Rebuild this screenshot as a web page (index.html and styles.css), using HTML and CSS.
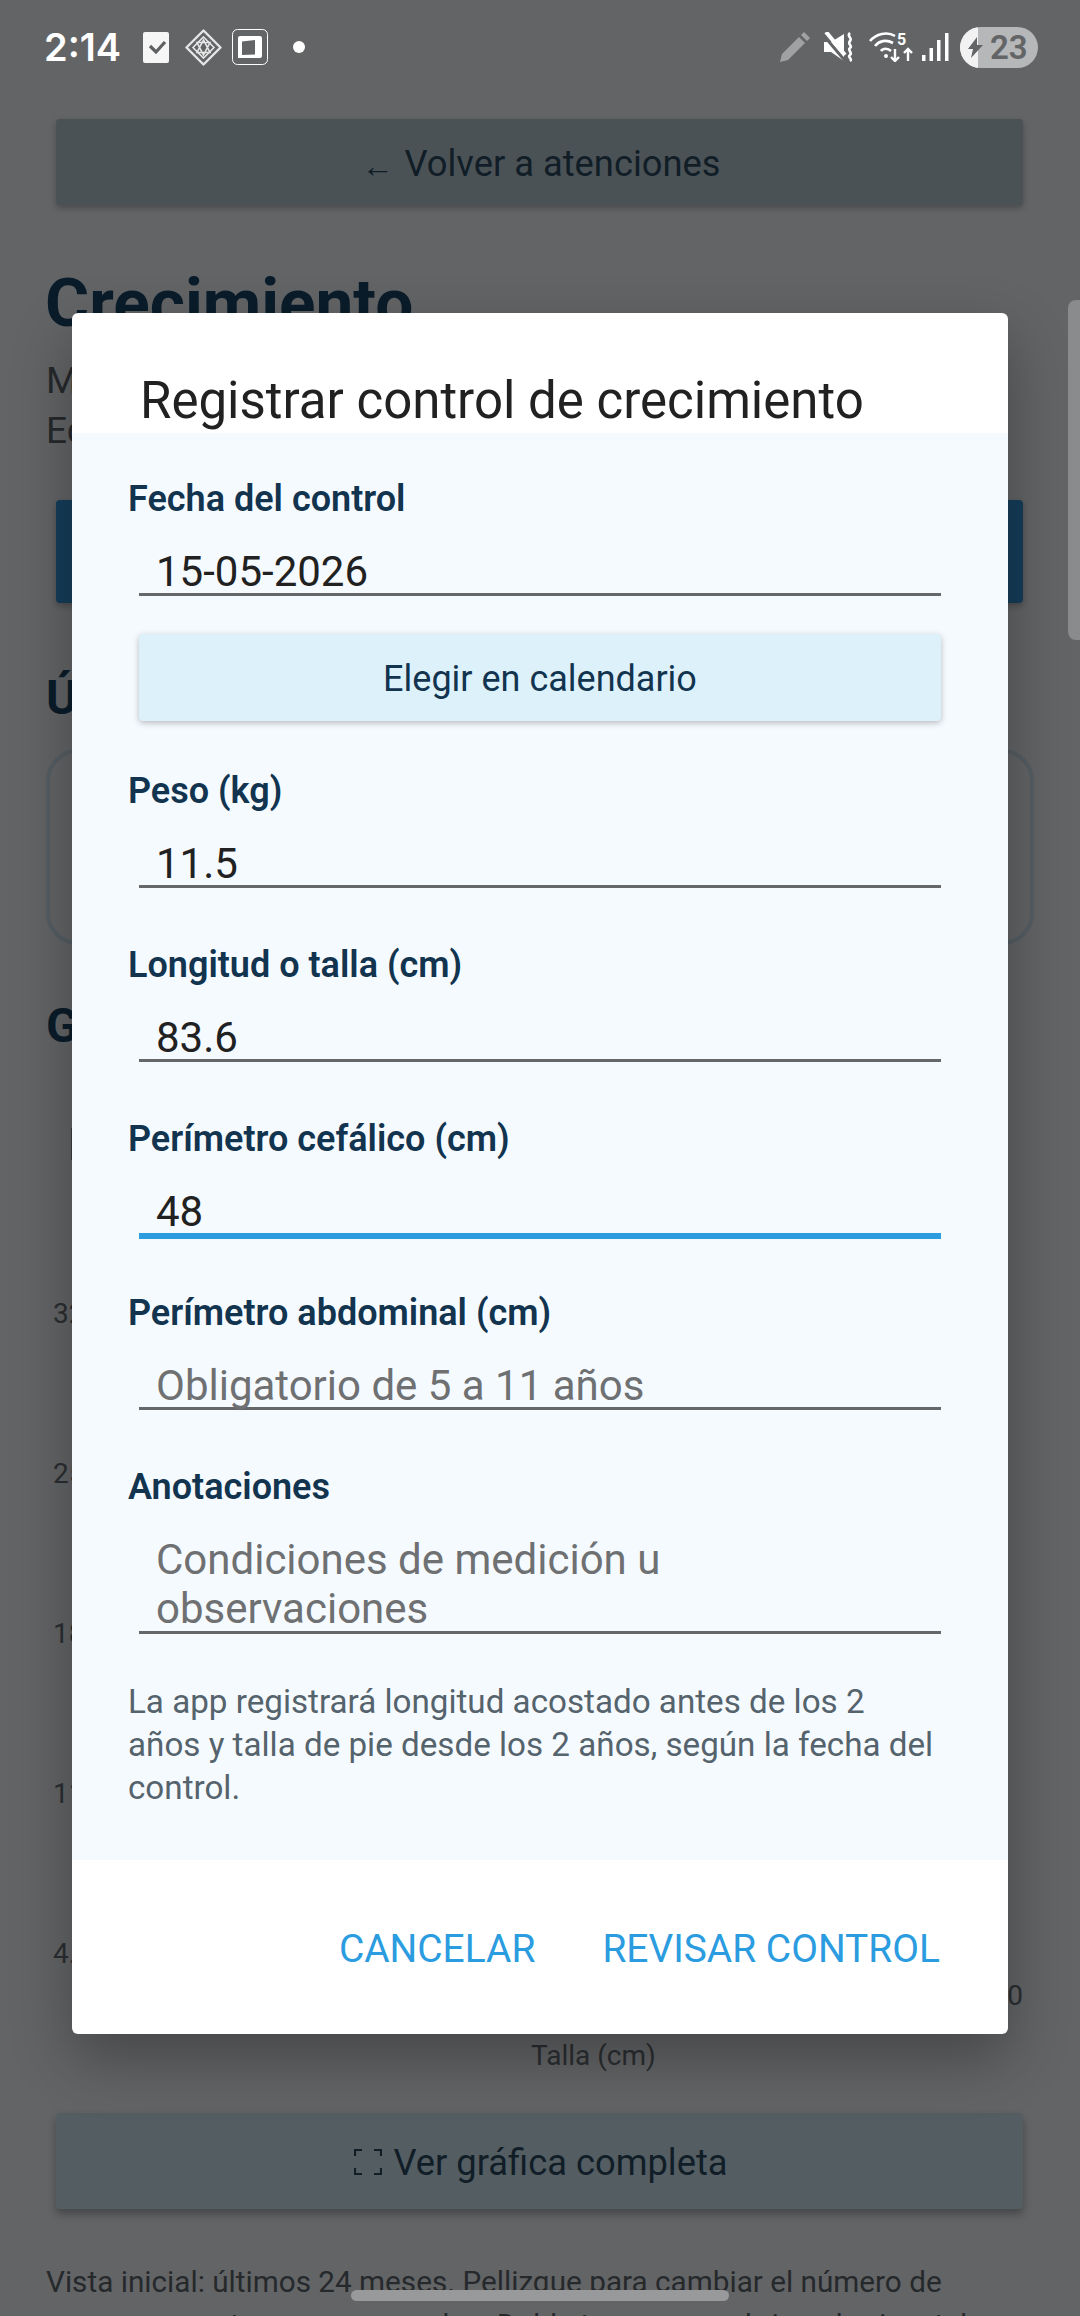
FILE: index.html
```html
<!DOCTYPE html>
<html>
<head>
    <meta charset="UTF-8">
    <title>Registrar control de crecimiento</title>
    <link rel="stylesheet" href="styles.css">
</head>
<body>
    <div class="screen">
        <!-- pantalla de fondo -->
        <div class="statusbar">
            <div class="status_left">
                <span class="clock">2:14</span>
                <svg class="ico_check" width="26" height="31" viewBox="0 0 26 31"><rect width="26" height="31" rx="2" fill="#f6f6f6"/><path d="M7 14l6 6 9-10" fill="none" stroke="#5f6062" stroke-width="3.2"/></svg>
                <svg class="ico_diamond" width="37" height="37" viewBox="0 0 37 37"><g fill="none" stroke="#e6e6e6"><path d="M18.500 1.500L35.500 18.500 18.500 35.500 1.500 18.500z" stroke-width="2.400" stroke-linejoin="round"/><path d="M18.500 8L29 18.500 18.500 29 8 18.500z" stroke-width="1.600"/><path d="M12 13.500h13L18.500 26zM12 23.500h13L18.500 11z" stroke-width="1.600"/></g></svg>
                <svg class="ico_square" width="36" height="36" viewBox="0 0 36 36"><rect x=".5" y=".5" width="35" height="35" rx="5" fill="none" stroke="#fff"/><path d="M8 9a2 2 0 0 1 2-2h20a2 2 0 0 1 2 2v18a2 2 0 0 1-2 2H8z M12 12.500v13.500l13-.5V11z" transform="translate(-2)" fill="#fff" fill-rule="evenodd"/></svg>
                <span class="dot"></span>
            </div>
            <div class="status_right">
                <svg class="ico_pen" width="30" height="30" viewBox="0 0 30 30"><path d="M0 30l2-8L19 5l6 6L8 28z" fill="#a0a1a2"/><path d="M21 3l3-3 6 6-3 3z" fill="#a0a1a2"/></svg>
                <svg class="ico_mute" width="30" height="30" viewBox="0 0 30 30"><path d="M0 10h7L20 2v27L7 20H0z" fill="#fff"/><path d="M0 4l23 27" stroke="#636466" stroke-width="3"/><path d="M2 0l19 23" stroke="#fff" stroke-width="4"/><path d="M26 1c-4 3 3 5 0 8s3 5 0 7 3 5 0 7 3 4 0 6" fill="none" stroke="#fff" stroke-width="2.600"/></svg>
                <svg class="ico_wifi" width="44" height="30" viewBox="0 0 44 30"><g fill="none" stroke="#fff" stroke-width="2.600"><path d="M1 9C7 2 18-1 26 4"/><path d="M6 14c4-5 11-7 18-3"/><path d="M12 19c2-3 7-3 10 0"/></g><circle cx="17" cy="24" r="2" fill="#fff"/><text x="28" y="13" class="net_text">5</text><path d="M26 17v12m-4-4l4 4 4-4M39 29V17m-4 4l4-4 4 4" fill="none" stroke="#fff" stroke-width="2.400"/></svg>
                <svg class="ico_signal" width="27" height="28" viewBox="0 0 27 28"><rect y="22" width="3.500" height="6" fill="#fff"/><rect x="7.500" y="15" width="3.500" height="13" fill="#fff"/><rect x="15" y="7" width="3.500" height="21" fill="#fff"/><rect x="23" width="3.500" height="28" fill="#fff"/></svg>
                <div class="battery">
                    <div class="battery_fill"></div>
                    <svg class="bolt" width="15" height="21" viewBox="0 0 15 21"><path d="M9 0L0 12h5L3 21l12-13H9z" fill="#636466"/></svg>
                    <span class="battery_num">23</span>
                </div>
            </div>
        </div>

        <div class="page">
            <a class="btn btn_back"><span class="arrow">←</span> Volver a atenciones</a>
            <h1>Crecimiento</h1>
            <p class="sub">María Paz<br>Edad: 1 año</p>
            <a class="btn btn_blue"></a>
            <h2>Último control</h2>
            <div class="last_card"></div>
            <h2 class="h_chart">Gráfica</h2>
            <div class="chart">
                <div class="y_tick"></div>
                <div class="y_labels">
                    <span>32.0</span><span>25.0</span><span>18.0</span><span>11.0</span><span>4.0</span>
                </div>
                <div class="x_end">120</div>
                <div class="x_title">Talla (cm)</div>
            </div>
            <a class="btn btn_full">
                <svg width="28" height="26" viewBox="0 0 28 26"><path d="M1 7V1h7M20 1h7v6M27 19v6h-7M8 25H1v-6" fill="none" stroke="#111d27" stroke-width="2.200"/></svg>
                Ver gráfica completa
            </a>
            <p class="hint">Vista inicial: últimos 24 meses. Pellizque para cambiar el número de meses y arrastre para recorrerlos. Doble toque para abrir en horizontal</p>
        </div>
        <div class="scrollbar"></div>

        <!-- dialogo -->
        <div class="dialog">
            <div class="dialog_title">Registrar control de crecimiento</div>
            <div class="dialog_body">
                <label class="label">Fecha del control</label>
                <div class="input">15-05-2026</div>
                <a class="btn_cal">Elegir en calendario</a>

                <label class="label">Peso (kg)</label>
                <div class="input">11.5</div>

                <label class="label">Longitud o talla (cm)</label>
                <div class="input">83.6</div>

                <label class="label">Perímetro cefálico (cm)</label>
                <div class="input focus">48</div>

                <label class="label">Perímetro abdominal (cm)</label>
                <div class="input empty">Obligatorio de 5 a 11 años</div>

                <label class="label">Anotaciones</label>
                <div class="input empty multi">Condiciones de medición u<br>observaciones</div>

                <p class="note">La app registrará longitud acostado antes de los 2 años y talla de pie desde los 2 años, según la fecha del control.</p>
            </div>
            <div class="dialog_actions">
                <a>CANCELAR</a>
                <a>REVISAR CONTROL</a>
            </div>
        </div>
        <div class="gesture"></div>
    </div>
</body>
</html>
```

FILE: styles.css
```css
* {
    margin: 0;
    padding: 0;
    box-sizing: border-box;
}
html, body {
    width: 1080px;
    height: 2316px;
    overflow: hidden;
}
body {
    font-family: Roboto, "Noto Sans", sans-serif;
    background: #636466;
}
.screen {
    position: relative;
    width: 1080px;
    height: 2316px;
    overflow: hidden;
    background: #636466;
}

/* barra de estado */
.statusbar {
    display: flex;
    justify-content: space-between;
    align-items: center;
    height: 94px;
    padding: 0 42px 0 44px;
}
.status_left, .status_right {
    display: flex;
    align-items: center;
}
.clock {
    font-family: Inter, Roboto, sans-serif;
    font-size: 38px;
    font-weight: 600;
    color: #fff;
}
.ico_check {
    margin-left: 22px;
}
.ico_diamond {
    margin-left: 16px;
}
.ico_square {
    margin-left: 10px;
}
.dot {
    width: 12px;
    height: 12px;
    margin-left: 25px;
    border-radius: 50%;
    background: #fff;
}
.ico_mute {
    margin-left: 14px;
}
.ico_wifi {
    margin-left: 15px;
}
.ico_signal {
    margin-left: 9px;
}
.net_text {
    font-family: Roboto, sans-serif;
    font-size: 16px;
    font-weight: 700;
    fill: #fff;
}
.battery {
    position: relative;
    display: flex;
    align-items: center;
    width: 78px;
    height: 41px;
    margin-left: 11px;
    border-radius: 21px;
    overflow: hidden;
    background: #b6b7b8;
}
.battery_fill {
    width: 18px;
    height: 100%;
    background: #f2f2f2;
    flex: none;
}
.bolt {
    position: absolute;
    top: 10px;
    left: 8px;
}
.battery_num {
    padding-left: 12px;
    font-size: 33px;
    line-height: 41px;
    font-weight: 600;
    color: #636466;
}

/* pantalla de fondo, atenuada */
.page {
    padding: 25px 57px 0 46px;
}
.btn {
    display: flex;
    align-items: center;
    justify-content: center;
    gap: 11px;
    margin-left: 10px;
    padding: 2px 0 0 3px;
    border-radius: 4px;
    box-shadow: 0 3px 6px rgba(0,0,0,0.25);
    font-size: 36.3px;
    color: #111d27;
}
.btn_back {
    height: 86px;
    background: #4a5256;
}
.arrow {
    font-size: 32px;
    padding-top: 6px;
}
h1 {
    margin-top: 60px;
    margin-left: -1px;
    font-size: 67.5px;
    line-height: 76px;
    font-weight: 700;
    color: #0a1c2a;
}
.sub {
    margin-top: 15px;
    font-size: 37px;
    line-height: 50px;
    color: #26292c;
}
.btn_blue {
    height: 103px;
    margin-top: 44px;
    background: #153d5a;
}
h2 {
    margin-top: 65px;
    font-size: 48px;
    line-height: 60px;
    font-weight: 700;
    color: #0a1c2a;
}
.last_card {
    width: 988px;
    height: 196px;
    margin-top: 21px;
    border: 4px solid #555e64;
    border-radius: 32px;
}
.h_chart {
    margin-top: 51px;
}
.chart {
    position: relative;
    height: 1057px;
    font-size: 28px;
    color: #2b2e31;
}
.y_tick {
    position: absolute;
    top: 72px;
    left: 25px;
    width: 2px;
    height: 32px;
    background: #3a3d40;
}
.y_labels {
    position: absolute;
    top: 241px;
    left: 7px;
    display: flex;
    flex-direction: column;
    gap: 126px;
    line-height: 34px;
}
.x_end {
    position: absolute;
    top: 923px;
    right: 0;
    line-height: 34px;
}
.x_title {
    position: absolute;
    top: 983px;
    left: 485px;
    line-height: 34px;
}
.btn_full {
    height: 96px;
    background: #545e62;
    box-shadow: 0 5px 8px rgba(0,0,0,0.3);
}
.hint {
    margin-top: 51px;
    width: 960px;
    font-size: 29.7px;
    line-height: 43px;
    color: #26292c;
}
.scrollbar {
    position: absolute;
    top: 300px;
    right: 0;
    width: 12px;
    height: 340px;
    border-radius: 8px 0 0 8px;
    background: #8a8b8c;
}

/* dialogo */
.dialog {
    position: absolute;
    top: 313px;
    left: 72px;
    width: 936px;
    height: 1721px;
    display: flex;
    flex-direction: column;
    border-radius: 6px;
    overflow: hidden;
    background: #fff;
    box-shadow: 0 24px 60px rgba(0,0,0,0.3);
}
.dialog_title {
    height: 120px;
    padding: 60px 0 0 68px;
    font-size: 51px;
    line-height: 56px;
    color: #212121;
    flex: none;
}
.dialog_body {
    height: 1427px;
    padding: 44px 67px 0 56px;
    background: #f5faff;
    flex: none;
}
.label {
    display: block;
    font-size: 36px;
    line-height: 44px;
    font-weight: 600;
    color: #12344f;
}
.input {
    margin: 16px 0 0 11px;
    padding: 12px 0 0 17px;
    height: 59px;
    border-bottom: 3px solid #666769;
    font-size: 42px;
    line-height: 46px;
    color: #212121;
}
.input + .label {
    margin-top: 55px;
}
.input.focus {
    height: 62px;
    border-bottom: 6px solid #2b9cdf;
}
.input.focus + .label {
    margin-top: 52px;
}
.input.empty {
    color: #6e7072;
}
.input.multi {
    height: 109px;
    padding-top: 10px;
    line-height: 49px;
}
.btn_cal {
    display: flex;
    align-items: center;
    justify-content: center;
    height: 87px;
    margin: 38px 0 48px 11px;
    padding-top: 2px;
    border-radius: 4px;
    background: #ddf1fb;
    box-shadow: 0 2px 6px rgba(0,0,0,0.25);
    font-size: 36px;
    color: #12344f;
}
.note {
    margin-top: 46px;
    font-size: 33.2px;
    line-height: 43px;
    color: #55636c;
}
.dialog_actions {
    display: flex;
    justify-content: flex-end;
    gap: 67px;
    padding: 62px 68px 0 0;
    font-size: 38.9px;
    line-height: 54px;
    color: #2b9cdf;
}
.gesture {
    position: absolute;
    top: 2290px;
    left: 351px;
    width: 378px;
    height: 11px;
    border-radius: 6px;
    background: #98999b;
}
```
